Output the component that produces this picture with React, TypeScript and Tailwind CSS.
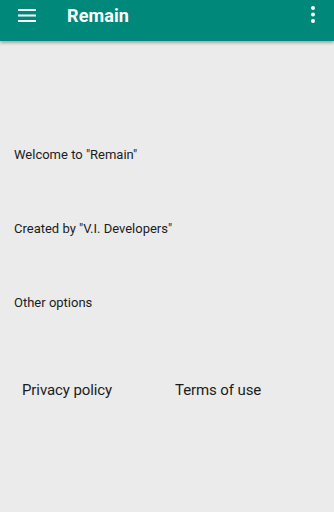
export default function App() {
  return (
    <div className="flex flex-col w-[334px] h-[512px] bg-[#ebebeb] font-['Roboto','Liberation_Sans',sans-serif] text-[#1c1c1c] overflow-hidden">
      {/* Toolbar */}
      <header className="h-[41px] bg-[#00897b] flex items-start shadow-[0_2px_3px_rgba(0,0,0,0.3)] relative z-10">
        <div className="w-[52px] flex justify-center pl-[1px] pt-[9px]">
          <svg width="18" height="14" viewBox="0 0 18 14">
            <rect x="0" y="0" width="18" height="2" fill="#fff" />
            <rect x="0" y="5.5" width="18" height="2" fill="#fff" />
            <rect x="0" y="11" width="18" height="2" fill="#fff" />
          </svg>
        </div>
        <h1 className="ml-[15px] mt-[4px] text-[18px] leading-[24px] font-bold text-white tracking-[0.1px]">Remain</h1>
        <div className="ml-auto w-[42px] flex justify-center pr-[1px] pt-[6px]">
          <svg width="4" height="17" viewBox="0 0 4 17">
            <circle cx="2" cy="2" r="2" fill="#fff" />
            <circle cx="2" cy="8.5" r="2" fill="#fff" />
            <circle cx="2" cy="15" r="2" fill="#fff" />
          </svg>
        </div>
      </header>

      <main className="flex flex-col px-[14px] text-[13px]">
        <p className="mt-[105px] leading-[18px]">Welcome to "Remain"</p>
        <p className="mt-[56px] leading-[18px]">Created by "V.I. Developers"</p>
        <p className="mt-[56px] leading-[18px]">Other options</p>

        <div className="mt-[68px] flex text-[15px] leading-[20px]">
          <span className="ml-[8px] w-[153px] tracking-[-0.1px]">Privacy policy</span>
          <span className="tracking-[-0.1px]">Terms of use</span>
        </div>
      </main>
    </div>
  );
}
